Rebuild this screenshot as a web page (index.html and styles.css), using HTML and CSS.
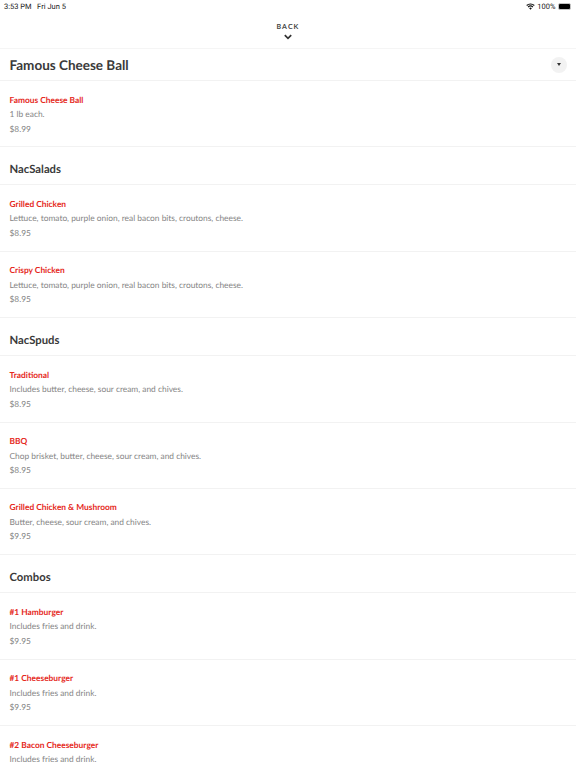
FILE: index.html
```html
<!DOCTYPE html>
<html lang="en">
<head>
<meta charset="utf-8">
<title>Menu</title>
<link rel="stylesheet" href="styles.css">
</head>
<body>
<div class="status">
  <div class="status-left"><span>3:53 PM</span><span>Fri Jun 5</span></div>
  <div class="status-right">
    <svg class="wifi" width="9" height="7" viewBox="0 0 10 8"><path d="M5 7.6 3.5 5.9a2.2 2.2 0 0 1 3 0zM2.7 5.1 1.8 4.1a4.7 4.7 0 0 1 6.4 0l-.9 1a3.4 3.4 0 0 0-4.6 0zM1.1 3.4 .2 2.4a7 7 0 0 1 9.6 0l-.9 1a5.7 5.7 0 0 0-7.8 0z" fill="#111"/></svg>
    <span>100%</span>
    <span class="battery"></span>
  </div>
</div>
<header class="back">
  <span class="back-label">BACK</span>
  <svg class="chevron" width="8" height="6" viewBox="0 0 8 6"><path d="M.8 1.2 4 4.4 7.2 1.2" fill="none" stroke="#333" stroke-width="1.7"/></svg>
</header>
<main class="menu">
  <div class="title-row">
    <h1>Famous Cheese Ball</h1>
    <span class="toggle"><span class="caret"></span></span>
  </div>
  <article class="item"><h3>Famous Cheese Ball</h3><p>1 lb each.</p><p>$8.99</p></article>
  <h2>NacSalads</h2>
  <article class="item"><h3>Grilled Chicken</h3><p>Lettuce, tomato, purple onion, real bacon bits, croutons, cheese.</p><p>$8.95</p></article>
  <article class="item"><h3>Crispy Chicken</h3><p>Lettuce, tomato, purple onion, real bacon bits, croutons, cheese.</p><p>$8.95</p></article>
  <h2>NacSpuds</h2>
  <article class="item"><h3>Traditional</h3><p>Includes butter, cheese, sour cream, and chives.</p><p>$8.95</p></article>
  <article class="item"><h3>BBQ</h3><p>Chop brisket, butter, cheese, sour cream, and chives.</p><p>$8.95</p></article>
  <article class="item"><h3>Grilled Chicken &amp; Mushroom</h3><p>Butter, cheese, sour cream, and chives.</p><p>$9.95</p></article>
  <h2>Combos</h2>
  <article class="item"><h3>#1 Hamburger</h3><p>Includes fries and drink.</p><p>$9.95</p></article>
  <article class="item"><h3>#1 Cheeseburger</h3><p>Includes fries and drink.</p><p>$9.95</p></article>
  <article class="item"><h3>#2 Bacon Cheeseburger</h3><p>Includes fries and drink.</p><p>$9.95</p></article>
</main>
</body>
</html>
```
FILE: styles.css
```css
* { box-sizing: border-box; margin: 0; padding: 0; }
html, body { height: 768px; overflow: hidden; background: #fff; }
body { font-family: Lato, "Open Sans", sans-serif; color: #333; text-rendering: geometricPrecision; }
.status { height: 12px; padding: 0 5px 0 4px; display: flex; justify-content: space-between; align-items: center; font-family: Roboto, "Liberation Sans", sans-serif; font-size: 7.5px; color: #222; }
.status-left { display: flex; gap: 5.5px; }
.status-right { display: flex; align-items: center; gap: 2.5px; }
.battery { width: 13px; height: 7px; border-radius: 2px; background: #000; display: block; border: 1px solid #c4c4c4; }
.back { height: 37px; display: flex; flex-direction: column; align-items: center; padding-top: 10.5px; border-bottom: 1px solid #f5f5f5; }
.back-label { font-size: 7px; line-height: 9px; font-weight: 700; letter-spacing: 1.1px; color: #444; }
.chevron { margin-top: 2.5px; }
.title-row { height: 32px; display: flex; align-items: center; justify-content: space-between; padding: 0 9px 0 9.5px; border-bottom: 1px solid #f2f2f2; }
h1 { font-size: 13.5px; line-height: 17px; padding-top: 1px; font-weight: 700; color: #3a3a3a; }
.toggle { width: 16px; height: 16px; border-radius: 50%; background: #f2f2f2; display: flex; align-items: center; justify-content: center; }
.caret { width: 0; height: 0; border-left: 2px solid transparent; border-right: 2px solid transparent; border-top: 3px solid #333; }
h2 { height: 38px; padding: 8px 9.5px 0; display: flex; align-items: center; font-size: 11.3px; font-weight: 700; color: #3a3a3a; border-bottom: 1px solid #f2f2f2; }
.item { height: 66.4px; padding: 11.5px 9.5px 0; border-bottom: 1px solid #f2f2f2; }
.item h3 { font-size: 8.4px; line-height: 14.5px; font-weight: 700; color: #e5291c; }
.item p { font-size: 8.4px; line-height: 14.5px; color: #858585; }
```
